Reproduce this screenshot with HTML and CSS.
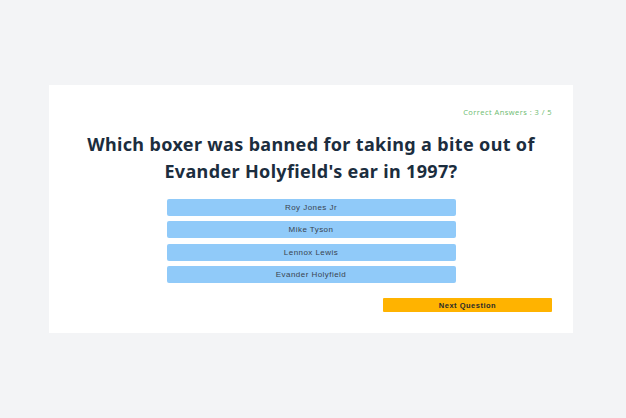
FILE: index.html
```html
<!DOCTYPE html>
<html>
<head>
<meta charset="utf-8">
<link rel="stylesheet" href="styles.css">
</head>
<body>
<div class="card">
  <div class="score">Correct Answers : 3 / 5</div>
  <h1 class="question">Which boxer was banned for taking a bite out of Evander Holyfield's ear in 1997?</h1>
  <div class="answers">
    <button class="answer">Roy Jones Jr</button>
    <button class="answer">Mike Tyson</button>
    <button class="answer">Lennox Lewis</button>
    <button class="answer">Evander Holyfield</button>
  </div>
  <div class="footer">
    <button class="next">Next Question</button>
  </div>
</div>
</body>
</html>
```
FILE: styles.css
```css
html, body {
  margin: 0;
  padding: 0;
}
body {
  background: #f3f4f6;
  width: 626px;
  height: 418px;
  padding-top: 85px;
  box-sizing: border-box;
}
.card {
  width: 524px;
  height: 248px;
  margin-left: 49px;
  background: #ffffff;
  box-sizing: border-box;
  padding: 21px 21px 0 21px;
  display: flex;
  flex-direction: column;
}
.score {
  text-align: right;
  font-family: "Open Sans", sans-serif;
  font-size: 7.5px;
  line-height: 12px;
  letter-spacing: 0.45px;
  color: #6dbb70;
}
.question {
  margin: 13px 0 0 0;
  padding: 0 14px;
  text-align: center;
  font-family: "Noto Sans", sans-serif;
  font-weight: 700;
  font-size: 18px;
  line-height: 27px;
  letter-spacing: 0.35px;
  color: #1b2d3e;
}
.answers {
  margin-top: 14px;
  display: flex;
  flex-direction: column;
  align-items: center;
  gap: 5.4px;
}
.answer {
  width: 289px;
  height: 17px;
  border: none;
  border-radius: 2px;
  background: #90caf9;
  font-family: "Liberation Sans", Arial, sans-serif;
  font-size: 8px;
  letter-spacing: 0.45px;
  color: #3a4450;
  padding: 0;
}
.footer {
  margin-top: 15px;
  display: flex;
  justify-content: flex-end;
}
.next {
  width: 169px;
  height: 14px;
  border: none;
  border-radius: 1px;
  background: #ffb300;
  font-family: "Liberation Sans", Arial, sans-serif;
  font-weight: 700;
  font-size: 7.5px;
  letter-spacing: 0.5px;
  color: #2a2a2a;
  padding: 0;
}
```
